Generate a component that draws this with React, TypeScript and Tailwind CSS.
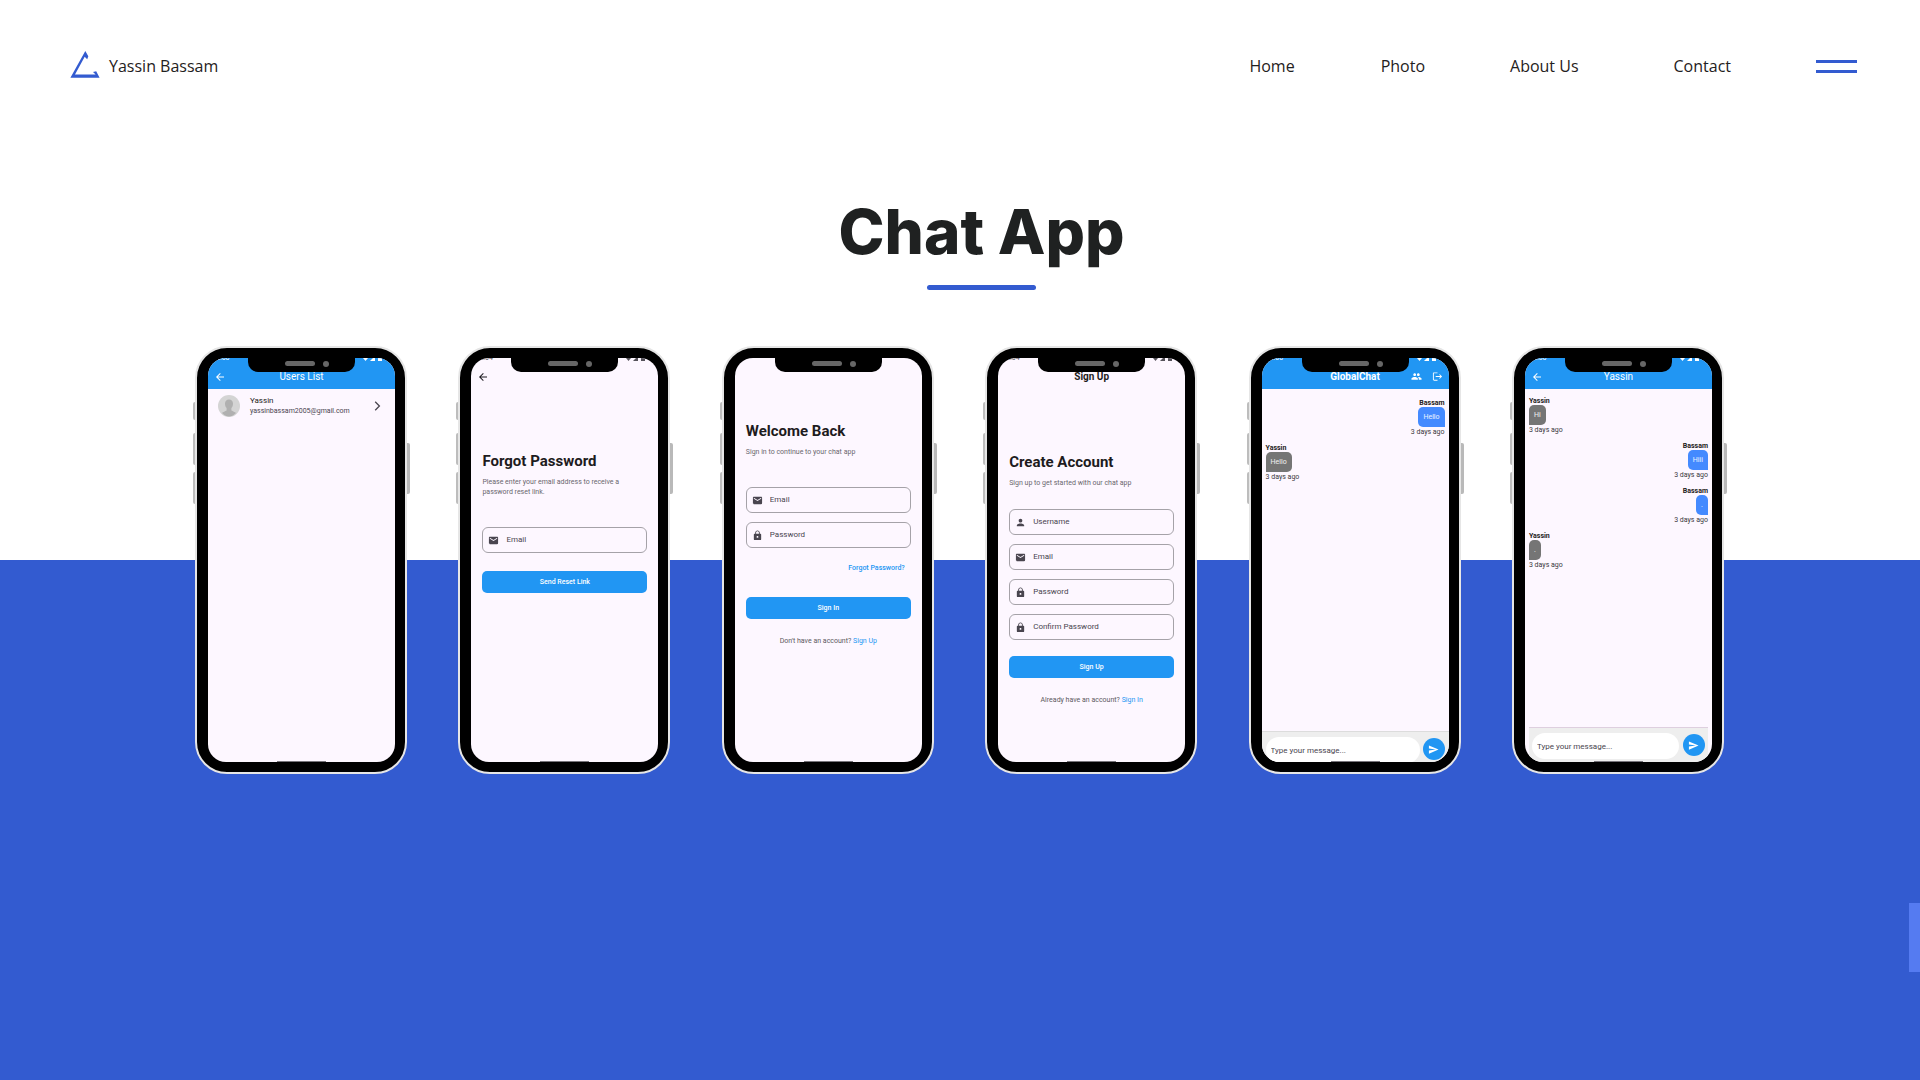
import React from "react";
import type { ReactNode } from "react";
import { MdArrowBack, MdEmail, MdLock, MdPerson, MdGroup, MdLogout, MdSend } from "react-icons/md";

type PhoneProps = {
  time?: string;
  light?: boolean;
  children: ReactNode;
};

function StatusBar({ time, light }: { time: string; light?: boolean }) {
  return (
    <div
      className={`absolute inset-x-0 top-0 flex h-[3px] items-end justify-between overflow-hidden pl-2 pr-3 ${
        light ? "text-white" : "text-[#55525a]"
      }`}
    >
      <span className="text-[7px] leading-[5px]">{time}</span>
      <svg width="20" height="3" viewBox="0 0 20 3" fill="currentColor" aria-hidden="true">
        <path d="M0 0h5L2.5 3z" />
        <path d="M7 3l3-3h2v3z" />
        <path d="M15 0h4v3h-4z" />
      </svg>
    </div>
  );
}

function Phone({ time, light, children }: PhoneProps) {
  return (
    <article className="relative w-[217px] shrink-0 pl-[2px] pr-[3px]">
      <span className="absolute left-0 top-[56px] h-[18px] w-1 rounded-l-[2px] bg-[#bdbdbd]" />
      <span className="absolute left-0 top-[87px] h-8 w-1 rounded-l-[2px] bg-[#bdbdbd]" />
      <span className="absolute left-0 top-[126px] h-8 w-1 rounded-l-[2px] bg-[#bdbdbd]" />
      <span className="absolute right-0 top-[97px] h-[51px] w-1 rounded-r-[2px] bg-[#b9b9b9]" />
      <div className="relative rounded-[32px] border-2 border-[#e6e6e6] bg-black py-[10px] pl-[11px] pr-[10px]">
        <div className="relative flex h-[404px] flex-col overflow-hidden rounded-[18px] bg-[#fdf7ff] text-[#1d1b20]">
          {children}
          {time && <StatusBar time={time} light={light} />}
          <div className="absolute left-10 top-0 flex h-[14px] w-[107px] items-start justify-end gap-2 rounded-b-[10px] bg-black pr-[26px] pt-[3px]">
            <span className="h-[5px] w-[30px] rounded-full bg-[#666]" />
            <span className="size-[6px] rounded-full bg-[#666]" />
          </div>
          <span className="absolute bottom-0 left-[69px] h-px w-[49px] bg-[#77747a]" />
        </div>
      </div>
    </article>
  );
}

function AppBar({
  title,
  bold,
  plain,
  back,
  actions,
}: {
  title?: string;
  bold?: boolean;
  plain?: boolean;
  back?: boolean;
  actions?: ReactNode;
}) {
  return (
    <header
      className={`grid h-[31px] shrink-0 grid-cols-[1fr_auto_1fr] items-center px-[6px] pt-[6px] ${
        plain ? "" : "bg-[#2196f3] text-white"
      }`}
    >
      <div className="flex">
        {back && (
          <button type="button" aria-label="Back">
            <MdArrowBack size={12} />
          </button>
        )}
      </div>
      <h2 className={`text-[10px] leading-3 ${bold ? "font-bold" : ""}`}>{title}</h2>
      <div className="flex justify-end gap-[10px]">{actions}</div>
    </header>
  );
}

function Intro({ title, text }: { title: string; text: string }) {
  return (
    <>
      <h2 className="text-[15px] font-bold leading-[18px]">{title}</h2>
      <p className="mt-[7px] text-[7px] leading-[10px] text-[#6a676e]">{text}</p>
    </>
  );
}

function Field({ icon, label, type = "text" }: { icon: ReactNode; label: string; type?: string }) {
  return (
    <label className="flex h-[26px] items-center gap-[7px] rounded-[6px] border border-[#a5a2a8] pl-[5px] text-[#49454f]">
      {icon}
      <input
        type={type}
        aria-label={label}
        placeholder={label}
        className="w-full min-w-0 bg-transparent text-[8px] leading-[10px] outline-none placeholder:text-[#49454f]"
      />
    </label>
  );
}

function PrimaryButton({ children }: { children: ReactNode }) {
  return (
    <button
      type="button"
      className="block h-[22px] w-full rounded-[5px] bg-[#2196f3] text-[7px] font-medium leading-[10px] text-white"
    >
      {children}
    </button>
  );
}

function Switcher({ text, link }: { text: string; link: string }) {
  return (
    <p className="mt-[17px] text-center text-[7px] leading-[10px] text-[#5c5960]">
      {text}{" "}
      <a href="#" className="text-[#2196f3]">
        {link}
      </a>
    </p>
  );
}

function Message({ name, text, mine }: { name: string; text: string; mine?: boolean }) {
  return (
    <li className={`flex flex-col ${mine ? "items-end" : "items-start"}`}>
      <span className="text-[7px] font-bold leading-2">{name}</span>
      <span
        className={`flex h-5 items-center rounded-t-[5px] px-[5px] text-[7px] leading-2 text-white/90 ${
          mine ? "rounded-bl-[5px] bg-[#448aff]" : "rounded-br-[5px] bg-[#757575]"
        }`}
      >
        {text}
      </span>
      <span className="mt-px text-[7px] leading-2 text-[#3a383d]">3 days ago</span>
    </li>
  );
}

function Composer({ inset }: { inset?: boolean }) {
  return (
    <form
      className={`mt-auto flex shrink-0 items-start border-t bg-[#eeeeee] pt-[5px] ${
        inset ? "mx-1 h-[35px] gap-1 border-[#decfdf] px-[3px]" : "h-[31px] gap-[3px] border-[#dcdcdc] px-1"
      }`}
    >
      <input
        type="text"
        aria-label="Type your message"
        placeholder="Type your message..."
        className="h-[26px] min-w-0 flex-1 rounded-full bg-white px-[5px] text-[8px] outline-none placeholder:text-[#49454f]"
      />
      <button
        type="button"
        aria-label="Send"
        className="mt-px flex size-[22px] shrink-0 items-center justify-center rounded-full bg-[#2196f3] text-white"
      >
        <MdSend size={11} />
      </button>
    </form>
  );
}

const email = <MdEmail size={11} className="shrink-0" />;
const lock = <MdLock size={11} className="shrink-0" />;
const person = <MdPerson size={11} className="shrink-0" />;

const links = [
  { label: "Home", gap: "" },
  { label: "Photo", gap: "ml-[86px]" },
  { label: "About Us", gap: "ml-[85px]" },
  { label: "Contact", gap: "ml-[95px]" },
];

export default function App() {
  return (
    <div className="relative min-h-screen bg-[linear-gradient(to_bottom,#ffffff_560px,#335bd0_560px)] font-['Roboto',sans-serif]">
      <header className="flex items-center justify-between pl-[71px] pr-[63px] pt-[52px] font-['Open_Sans',sans-serif] text-base leading-7 text-[#1f2121]">
        <a href="#" className="flex items-center gap-[10px]">
          <svg width="28" height="28" viewBox="0 1 28 28" fill="#335bd0" className="overflow-visible" aria-hidden="true">
            <path d="M14.3 0 17.3 5.2 16.2 8.2 13.7 5.8 4 23.400H24.6L22 21 25.200 20.300 28.600 26.800H-.6Z" />
          </svg>
          Yassin Bassam
        </a>
        <nav className="flex items-center">
          {links.map((l) => (
            <a key={l.label} href="#" className={l.gap}>
              {l.label}
            </a>
          ))}
          <button type="button" aria-label="Menu" className="ml-[85px] flex w-[41px] flex-col gap-[7px]">
            <span className="h-[3px] bg-[#335bd0]" />
            <span className="h-[3px] bg-[#335bd0]" />
          </button>
        </nav>
      </header>

      <main>
        <div className="flex flex-col items-center pl-[43px] pt-28">
          <h1 className="font-['Inter',sans-serif] text-[62px] font-extrabold leading-[80px] text-[#1f2121]">Chat App</h1>
          <span className="mt-[13px] h-[5px] w-[109px] rounded-full bg-[#335bd0]" />
        </div>

        <section className="mt-14 flex justify-between px-[193px]">
          <Phone time="5:00" light>
            <AppBar title="Users List" back />
            <ul>
              <li className="flex items-center pl-[10px] pr-[14px] pt-[6px]">
                <svg width="22" height="22" viewBox="0 0 22 22" aria-hidden="true">
                  <circle cx="11" cy="11" r="11" fill="#d4d4d4" />
                  <path
                    d="M11 4.5c-2.6 0-4 1.8-4 4.2 0 1.800.6 3.400 1.600 4.300v2.400c-1.500.9-3.400 1.300-4.600 2.700C5.700 20 8.200 21.500 11 21.500s5.300-1.500 7-3.400c-1.200-1.400-3.100-1.800-4.600-2.700V13c1-.9 1.600-2.500 1.600-4.300 0-2.400-1.400-4.200-4-4.200z"
                    fill="#b0b0b0"
                  />
                </svg>
                <div className="ml-[10px] flex-1">
                  <p className="text-[8px] leading-[10px]">Yassin</p>
                  <p className="text-[7px] leading-[10px] text-[#49454f]">yassinbassam2005@gmail.com</p>
                </div>
                <svg width="7" height="10" viewBox="0 0 7 10" fill="none" stroke="#49454f" strokeWidth="1.3" aria-hidden="true">
                  <path d="M1.200.8 5.400 5 1.200 9.200" />
                </svg>
              </li>
            </ul>
          </Phone>

          <Phone time="5:04">
            <AppBar plain back />
            <div className="px-[11px] pt-[63px]">
              <Intro title="Forgot Password" text="Please enter your email address to receive a password reset link." />
              <div className="mb-[18px] mt-[30px]">
                <Field icon={email} label="Email" type="email" />
              </div>
              <PrimaryButton>Send Reset Link</PrimaryButton>
            </div>
          </Phone>

          <Phone>
            <div className="px-[11px] pt-16">
              <Intro title="Welcome Back" text="Sign in to continue to your chat app" />
              <div className="mt-[30px] flex flex-col gap-[9px]">
                <Field icon={email} label="Email" type="email" />
                <Field icon={lock} label="Password" type="password" />
              </div>
              <p className="mb-6 mt-[15px] pr-[6px] text-right text-[7px] font-medium leading-[10px] text-[#2196f3]">
                <a href="#">Forgot Password?</a>
              </p>
              <PrimaryButton>Sign In</PrimaryButton>
              <Switcher text="Don't have an account?" link="Sign Up" />
            </div>
          </Phone>

          <Phone time="5:04">
            <AppBar title="Sign Up" plain bold />
            <div className="px-[11px] pt-16">
              <Intro title="Create Account" text="Sign up to get started with our chat app" />
              <div className="mb-4 mt-[21px] flex flex-col gap-[9px]">
                <Field icon={person} label="Username" />
                <Field icon={email} label="Email" type="email" />
                <Field icon={lock} label="Password" type="password" />
                <Field icon={lock} label="Confirm Password" type="password" />
              </div>
              <PrimaryButton>Sign Up</PrimaryButton>
              <Switcher text="Already have an account?" link="Sign In" />
            </div>
          </Phone>

          <Phone time="5:00" light>
            <AppBar
              title="GlobalChat"
              bold
              actions={
                <>
                  <button type="button" aria-label="Members">
                    <MdGroup size={11} />
                  </button>
                  <button type="button" aria-label="Log out">
                    <MdLogout size={11} />
                  </button>
                </>
              }
            />
            <ul className="flex flex-col gap-2 px-1 pt-[10px]">
              <Message name="Bassam" text="Hello" mine />
              <Message name="Yassin" text="Hello" />
            </ul>
            <Composer />
          </Phone>

          <Phone time="5:50" light>
            <AppBar title="Yassin" back />
            <ul className="flex flex-col gap-2 px-1 pt-2">
              <Message name="Yassin" text="Hi" />
              <Message name="Bassam" text="Hiii" mine />
              <Message name="Bassam" text="." mine />
              <Message name="Yassin" text="." />
            </ul>
            <Composer inset />
          </Phone>
        </section>
      </main>

      <button type="button" aria-label="Open side panel" className="absolute right-0 top-[903px] h-[69px] w-[11px] bg-[#557bf1]" />
    </div>
  );
}
